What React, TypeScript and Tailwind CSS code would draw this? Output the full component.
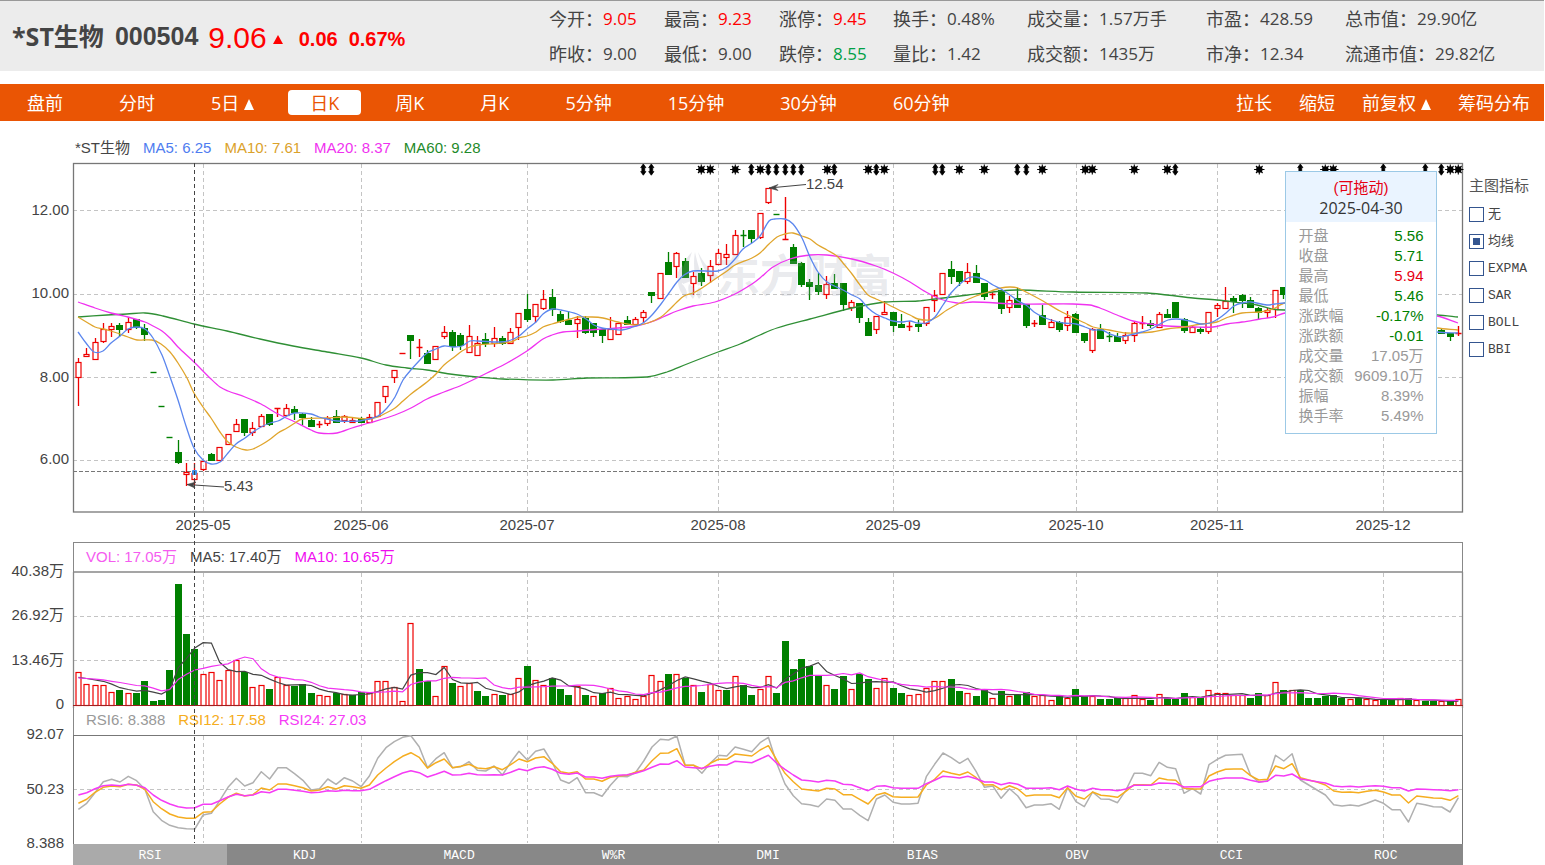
import React from "react";

const SANS = "font-['Liberation_Sans','Noto_Sans_CJK_SC',sans-serif]";
const UI = "font-['Open_Sans','Noto_Sans_CJK_SC',sans-serif]";
const MONO = "font-['Liberation_Mono','Noto_Sans_CJK_SC',monospace]";

const RED = "#ee0000";
const GREEN = "#008000";

const slotX = (i: number) => 78.4 + 8.313 * i;
const crisp = (v: number) => Math.floor(v) + 0.5;

/* colour, high, body top, body bottom, low */
type Candle = [string, number, number, number, number];

const candles: Candle[] = `
r358,362,377,405 r348,354,356,356 r338,342,359,359 r323,329,341,342 r323,326,329,336 g323,325,329,336 r317,322,329,332 g319,319,327,328 g324,328,334,340 g372,372,372,372
g406,406,406,406 g437,437,437,437 g440,452,462,463 r463,472,474,485 r463,473,479,484 r461,461,469,470 g453,454,460,460 r447,447,460,460 r434,434,444,444 r419,424,431,431
g419,419,432,435 r422,428,432,435 r414,416,426,426 g414,414,424,425 r408,408,408,417 r404,408,415,415 g406,409,412,419 g413,414,417,424 g417,420,426,426 r421,424,425,428
r416,418,423,425 g410,416,422,422 r415,416,420,422 r418,420,422,422 g417,419,422,422 r414,417,422,422 r402,402,416,416 r386,386,396,402 r370,370,377,382 r353,353,353,353
g335,335,340,358 r339,347,348,357 g350,353,363,363 r346,346,359,359 r326,332,336,338 g330,332,346,350 g333,335,345,349 r325,336,352,352 r336,343,355,355 g333,339,343,346
r327,338,343,346 g336,338,343,344 r328,332,343,343 r313,313,327,339 g294,309,319,321 r304,304,316,322 r290,299,308,309 g289,297,309,315 g311,314,321,322 g311,320,324,324
r316,319,323,337 g316,318,332,333 g323,323,332,336 g328,329,335,342 r317,329,339,339 r323,323,334,334 g316,320,324,324 r317,319,324,324 r310,312,317,322 g292,292,295,302
r273,273,298,298 g252,262,274,274 r252,253,266,277 g258,261,277,277 r272,276,283,294 g268,273,281,285 r260,266,275,282 r249,253,264,264 r244,254,257,264 r230,235,254,254
g230,235,236,247 g230,230,238,242 r213,213,237,238 r188,188,202,203 g214,214,214,214 r197,239,239,239 g244,247,263,263 g262,263,284,286 g279,282,286,299 g273,285,291,294
r276,284,294,298 g274,283,288,288 g283,283,304,310 r300,302,307,310 g303,303,317,322 g318,322,335,335 r316,316,329,333 r301,312,314,314 g312,312,325,331 g314,324,327,327
r321,326,327,331 g320,324,326,331 r307,307,323,325 r290,295,300,311 r273,273,294,294 g261,269,276,283 g271,271,281,285 r263,272,281,283 g265,273,282,282 g283,283,296,299
r292,294,295,299 g290,290,308,313 r296,300,307,312 g288,298,307,307 g304,304,325,327 r320,323,323,327 g305,315,324,324 r319,322,327,327 g321,322,329,331 r311,317,325,330
g313,314,332,332 g333,333,340,342 r328,329,350,352 g324,329,338,338 g332,336,337,342 g333,336,341,341 r332,335,340,343 r322,323,335,341 r316,323,323,329 g320,323,325,327
r312,314,327,327 g309,314,317,317 g302,302,317,317 g318,319,330,332 r326,327,332,332 g327,329,331,333 r312,312,331,333 r303,305,308,316 r287,301,308,308 g296,298,301,312
g294,295,300,307 g297,300,307,307 g307,308,312,318 r308,310,312,317 r290,290,309,317 g287,287,294,298 r290,292,299,302 g293,295,302,305 g298,300,306,308 r297,300,305,308
g300,302,308,310 g304,306,312,314 r305,307,312,315 g307,309,314,316 g310,312,318,320 r311,313,318,320 g313,315,320,322 g315,317,322,324 r316,318,323,325 g318,320,325,327
g320,322,327,329 r321,323,328,330 g323,325,330,331 g325,327,331,333 g328,330,333,333 g333,333,336,340 r326,333,333,336
`
  .trim()
  .split(/\s+/)
  .map((t) => {
    const [h, a, b, l] = t.slice(1).split(",").map(Number);
    return [t[0], h, a, b, l];
  });

const volumes = `
r33 r21 r20 r20 r13 g15 r12 g12 g24 g4 g5 g35 g121 g71 g56 r31 r33 r25 r35 r45 g33 r18 r20 g16 r28 r20 g19 g21 g12 r10 r9 g12 r11 g10 g13 r12 r24 r24 r18 r4
r82 g36 g24 r9 r39 g22 r19 r22 g14 g9 r11 g10 r11 r27 g39 r25 r20 g27 g16 g10 r19 g10 r9 g12 r17 r7 r9 r6 r9 r30 r24 g31 r31 g27 r20 g13 r21 r15 g15 r29
g20 g10 r16 r29 g12 g64 g36 g46 g39 g29 r20 g16 g29 r16 g31 g26 r17 r27 g17 g12 r10 r11 r17 r24 r24 g26 g14 r12 g9 g15 r7 g14 r9 g10 g13 r9 r10 r5 g9 r7
g16 g9 r9 g6 g6 g7 r7 r10 r6 g5 r11 g7 g6 g12 r8 g8 r15 r12 r12 r10 r10 g7 g12 r10 r23 g15 r15 g15 g7 g7 g9 g10 g7 r6 g7 r6 r5 g6 g5 r7
g7 r5 g4 g4 r4 g4 r6
`
  .trim()
  .split(/\s+/)
  .map((t) => ({ up: t[0] === "r", h: Number(t.slice(1)) }));

/* Moving average of the volume bars; earlier sessions outside the window count as 27. */
const volumeAverage = (n: number) =>
  volumes
    .map((_, i) => {
      let sum = 0;
      for (let k = i - n + 1; k <= i; k++) sum += k < 0 ? 27 : volumes[k].h;
      return `${slotX(i).toFixed(1)},${(705.5 - sum / n).toFixed(1)}`;
    })
    .join(" ");

const MA5 =
  "78,332 86,343 94,352 103,351 111,343 120,336 128,329 137,327 145,329 153,338 162,355 169,374 178,400 186,426 194,448 203,460 211,464 220,462 228,453 236,444 245,438 253,432 261,427 270,423 278,421 287,416 295,413 311,414 319,417 327,419 337,421 360,421 369,419 378,416 387,408 395,397 403,380 410,371 419,361 427,353 436,349 444,346 453,347 462,346 470,341 478,341 500,342 511,340 519,336 527,329 536,322 543,314 552,309 561,310 577,314 586,319 594,325 602,328 611,329 622,330 633,327 643,323 652,315 661,304 669,293 677,282 684,275 693,271 718,271 727,267 735,259 743,249 752,243 760,236 769,221 775,219 785,219 793,224 802,238 810,257 818,272 827,282 843,290 852,295 860,299 868,308 876,314 885,318 893,321 903,322 910,321 918,323 926,323 935,317 943,305 951,293 960,284 968,278 976,277 985,280 993,285 1001,289 1010,295 1018,301 1026,305 1034,312 1043,317 1051,320 1063,323 1076,324 1085,327 1093,330 1102,330 1110,334 1120,337 1130,335 1142,332 1151,329 1160,324 1168,320 1177,319 1190,321 1201,324 1210,323 1218,319 1226,313 1234,306 1242,303 1251,302 1267,305 1275,304 1285,303 1330,306 1390,324 1437,332 1458,333";
const MA10 =
  "78,317 88,323 95,327 103,329 111,331 128,337 137,340 152,340 161,344 170,352 178,363 187,378 194,393 203,407 211,418 220,432 228,442 236,447 246,450 253,449 261,445 269,440 278,433 287,428 295,423 302,419 327,418 344,417 369,419 378,417 386,413 395,408 403,401 411,394 419,388 427,382 436,374 444,365 453,358 462,351 470,347 478,345 511,342 519,338 527,336 536,332 543,327 552,324 570,319 578,317 592,317 603,318 618,322 636,325 648,323 661,317 669,310 677,302 684,296 693,293 702,288 718,277 727,271 735,265 752,258 760,253 769,244 777,237 785,234 793,233 802,236 810,239 818,245 827,250 837,256 843,263 852,274 860,285 868,295 876,299 885,303 893,307 901,311 910,315 918,319 930,320 937,317 947,310 960,303 976,296 985,293 1001,288 1010,287 1018,288 1026,292 1043,301 1060,311 1076,319 1085,323 1093,327 1109,330 1126,333 1152,332 1167,329 1184,327 1201,324 1217,322 1226,318 1242,313 1260,312 1273,309 1285,303 1330,303 1390,319 1437,328 1458,330";
const MA20 =
  "78,302 95,308 111,313 128,317 145,322 153,326 162,331 170,338 178,347 194,362 211,379 220,387 228,391 245,397 261,404 278,414 295,422 311,430 319,433 337,433 352,428 369,423 395,415 411,408 427,399 444,392 462,385 487,373 507,363 527,351 543,339 552,335 563,332 577,331 602,329 618,328 636,326 648,323 663,317 677,311 693,306 715,302 735,294 752,284 760,278 773,267 790,259 810,255 827,255 852,259 876,266 893,273 910,282 926,292 940,299 957,303 973,302 1018,304 1073,304 1090,305 1100,308 1117,315 1133,321 1151,324 1167,326 1193,327 1213,327 1227,324 1242,322 1260,319 1273,317 1285,313 1330,307 1390,310 1437,316 1458,323";
const MA60 =
  "78,317 107,315 127,314 145,313 163,316 194,324 227,331 260,339 293,346 327,352 361,358 386,365 407,368 427,370 450,374 477,377 503,379 553,380 587,378 647,377 667,372 687,364 718,352 740,344 760,335 777,328 810,319 852,308 885,302 918,301 935,299 968,295 1001,291 1018,290 1073,292 1147,293 1167,295 1193,298 1217,300 1242,303 1257,305 1272,309 1285,310 1360,312 1437,315 1458,317";

const RSI6 =
  "838 820 788 755 748 756 739 752 778 845 871 886 893 896 897 855 850 812 772 745 768 758 725 747 713 713 731 751 780 776 747 763 743 753 770 738 685 653 635 622 617 650 713 686 668 713 710 695 721 723 708 735 697 664 690 664 657 697 750 760 743 788 788 799 766 739 740 728 693 651 628 630 618 706 706 730 700 676 678 651 658 665 638 622 700 762 797 821 824 830 807 811 837 837 856 872 807 795 817 822 822 820 740 703 669 683 700 685 725 772 768 805 776 798 833 825 825 821 838 773 815 830 786 807 808 818 781 730 730 737 697 712 716 790 776 792 704 688 676 674 673 735 757 752 676 693 671 750 765 780 795 824 828 825 828 820 810 820 839 839 876 820 824 830 831 846 803";
const RSI12 =
  "820 808 787 772 768 770 763 765 778 815 836 852 861 865 865 847 845 822 802 790 798 794 774 780 762 762 767 773 783 780 770 777 767 770 775 765 735 714 695 679 668 682 714 698 687 713 709 703 714 716 710 719 704 687 695 684 680 700 725 730 725 747 747 754 742 738 736 727 720 692 670 669 656 706 706 717 700 688 688 672 675 678 660 647 690 730 755 777 780 783 775 777 794 794 808 822 795 788 800 802 802 801 765 748 723 730 735 726 743 765 764 779 767 777 798 795 795 795 803 773 799 807 786 796 798 802 784 764 764 765 744 749 751 775 777 777 738 726 718 717 717 737 750 748 708 716 701 743 750 756 765 783 787 786 788 784 781 786 795 795 819 798 801 804 805 811 797";
const RSI24 =
  "795 788 776 767 765 767 763 766 773 795 811 822 830 834 833 823 823 812 801 793 797 795 785 788 778 778 781 784 788 787 782 784 781 782 782 778 765 752 740 729 722 728 741 733 724 735 734 730 734 735 734 735 727 717 722 713 710 718 730 733 729 741 741 745 739 736 734 730 722 712 702 703 692 711 713 715 709 704 705 694 696 698 687 676 700 718 735 750 752 756 751 753 763 764 773 782 769 767 773 775 775 775 761 751 739 741 744 739 746 756 756 764 758 763 775 775 775 773 779 768 778 783 775 779 779 782 777 766 766 766 759 760 761 771 770 770 754 748 744 744 744 751 756 754 736 738 732 747 751 755 759 768 770 769 771 769 767 769 773 773 783 777 778 779 780 782 779";

const rsiPoints = (s: string) =>
  s
    .split(" ")
    .map((v, i) => `${slotX(i).toFixed(1)},${(530 + Number(v) / 3).toFixed(1)}`)
    .join(" ");

/* Smooth path through the given points (Catmull-Rom to Bézier). */
const smooth = (s: string) => {
  const p = s.split(" ").map((q) => q.split(",").map(Number));
  let d = `M${p[0][0]} ${p[0][1]}`;
  for (let i = 0; i < p.length - 1; i++) {
    const a = p[Math.max(0, i - 1)];
    const b = p[i];
    const c = p[i + 1];
    const e = p[Math.min(p.length - 1, i + 2)];
    const k = (c[0] - b[0]) / 3;
    const m1 = (c[1] - a[1]) / (c[0] - a[0]);
    const m2 = (e[1] - b[1]) / (e[0] - b[0]);
    d += `C${(b[0] + k).toFixed(1)} ${(b[1] + k * m1).toFixed(1)} ${(c[0] - k).toFixed(1)} ${(c[1] - k * m2).toFixed(1)} ${c[0]} ${c[1]}`;
  }
  return d;
};

const months = [
  { x: 203, label: "2025-05" },
  { x: 361, label: "2025-06" },
  { x: 527, label: "2025-07" },
  { x: 718, label: "2025-08" },
  { x: 893, label: "2025-09" },
  { x: 1076, label: "2025-10" },
  { x: 1217, label: "2025-11" },
  { x: 1383, label: "2025-12" },
];

const starMarks = [701, 710, 735, 760, 827, 868, 884, 959, 984, 1042, 1085, 1092, 1134, 1167, 1259, 1325, 1333, 1450, 1458];
const arrowMarks = [643, 651, 751, 768, 776, 785, 793, 801, 834, 876, 935, 942, 1017, 1026, 1175, 1300, 1383, 1425, 1441];

function MonthLines({ from, to }: { from: number; to: number }) {
  return (
    <g stroke="#c4c4c4" strokeDasharray="4 3">
      {months.map((m) => (
        <line key={m.x} x1={m.x + 0.5} x2={m.x + 0.5} y1={from} y2={to} />
      ))}
    </g>
  );
}

function Level({ y }: { y: number }) {
  return <line x1="73" x2="1462" y1={y} y2={y} stroke="#c4c4c4" strokeDasharray="4 3" />;
}

function AxisText({ x, y, anchor = "end", children }: { x: number; y: number; anchor?: "end" | "middle" | "start"; children: React.ReactNode }) {
  return (
    <text x={x} y={y} textAnchor={anchor} fill="#444">
      {children}
    </text>
  );
}

function CandleShape({ i, c }: { i: number; c: Candle }) {
  const [kind, high, top, bottom, low] = c;
  const x = crisp(slotX(i));
  const color = kind === "r" ? RED : GREEN;
  const flat = bottom - top <= 1;
  return (
    <g stroke={color} fill={color}>
      {flat ? (
        <path d={`M${x - 3} ${top + 0.5}h6M${x} ${high}V${low}`} strokeWidth="1.4" />
      ) : kind === "g" ? (
        <>
          <path d={`M${x} ${high}V${low + 1}`} strokeWidth="1.3" />
          <rect x={x - 3.5} y={top} width="7" height={bottom - top + 1} stroke="none" />
        </>
      ) : (
        <>
          <path d={`M${x} ${high}V${top}M${x} ${bottom}V${low + 1}`} strokeWidth="1.3" />
          <rect x={x - 2.5} y={top + 0.5} width="5" height={bottom - top} strokeWidth="1.2" fill="#fff" fillOpacity="0.4" />
        </>
      )}
    </g>
  );
}

function PriceChart() {
  return (
    <svg viewBox="0 157 1463 385" className={`block h-auto w-full overflow-visible text-[15px] ${SANS}`} fill="none" role="img" aria-label="日K线图">
      <MonthLines from={164} to={512} />
      {[210.5, 294.5, 377.5, 460.5].map((y) => (
        <Level key={y} y={y} />
      ))}
      <line x1="73" x2="1462" y1="471.5" y2="471.5" stroke="#777" strokeDasharray="4 2" />
      <rect x="73.5" y="163.5" width="1389" height="348.5" stroke="#777" strokeWidth="1.3" />
      {candles.map((c, i) => (
        <CandleShape key={i} i={i} c={c} />
      ))}
      <g fill="#a0a5b5" fillOpacity="0.24">
        <path d="M692 252c-8 7-11 19-9 32l8-3c-3-10-3-19 1-29zM695 252c-2 11-1 23 3 34l6-4c-4-10-7-20-9-30zM698 252c3 12 8 21 14 29l6-5c-9-6-15-14-20-24zM683 265c-6 5-7 12-3 20l4-3zM678 281c0 7 3 13 9 18 1-8-2-14-9-18zM689 284c-2 6 0 11 4 15 4-6 3-11-4-15zM699 287c-3 4-3 8 0 12 4-4 4-8 0-12z" />
        <text x="716" y="292" className="font-['Noto_Sans_CJK_SC',sans-serif] text-[44px] font-bold">
          东方财富
        </text>
      </g>
      <g strokeWidth="1.3">
        <path d={smooth(MA60)} stroke="#2f8f35" />
        <path d={smooth(MA20)} stroke="#f032f0" />
        <path d={smooth(MA10)} stroke="#e0a52c" />
        <path d={smooth(MA5)} stroke="#5b86ee" />
      </g>
      <rect x="192" y="470" width="5" height="5" rx="1" fill="#3f8fe8" />
      <g fill="#000" stroke="#000">
        {starMarks.map((x) => (
          <g key={x}>
            <circle cx={x + 0.3} cy="169.5" r="3.2" stroke="none" />
            <path d={`M${x - 4.9} 169.5h10.400M${x + 0.3} 164.400v10.200M${x - 3} 166l6.6 7M${x + 3.6} 166l-6.6 7`} strokeWidth="1.1" />
          </g>
        ))}
        {arrowMarks.map((x) => (
          <path key={x} d={`M${x + 0.3} 164l2.6 3.600h-1.2v4h1.2l-2.6 3.600l-2.6-3.600h1.2v-4h-1.2z`} strokeWidth="0.8" />
        ))}
      </g>
      <g stroke="#444" fill="#444">
        <path d="M806 184.500L769 188" />
        <path d="M769 188L778 184.500L775 187.500L778 190.500z" strokeWidth="0.6" />
        <path d="M224 487L187 484.500" />
        <path d="M187 484.500L196 482L193 485L195 488z" strokeWidth="0.6" />
      </g>
      <AxisText x={806} y={189} anchor="start">12.54</AxisText>
      <AxisText x={224} y={491} anchor="start">5.43</AxisText>
      <AxisText x={69} y={215}>12.00</AxisText>
      <AxisText x={69} y={298}>10.00</AxisText>
      <AxisText x={69} y={382}>8.00</AxisText>
      <AxisText x={69} y={464}>6.00</AxisText>
      {months.map((m) => (
        <AxisText key={m.label} x={m.x} y={530} anchor="middle">
          {m.label}
        </AxisText>
      ))}
    </svg>
  );
}

function VolumeChart() {
  return (
    <svg viewBox="0 572 1463 136" className={`block h-auto w-full overflow-visible text-[15px] ${SANS}`} fill="none" role="img" aria-label="成交量">
      <MonthLines from={573} to={705} />
      <Level y={616.5} />
      <Level y={660.5} />
      <path d="M73.500 572V708M1462.500 572V708M73 572H1463" stroke="#888" strokeWidth="1.3" />
      {volumes.map((v, i) => {
        const x = crisp(slotX(i));
        return v.up ? (
          <rect key={i} x={x - 2.5} y={705.5 - v.h} width="5" height={v.h} stroke={RED} strokeWidth="1.2" fill="#fff" />
        ) : (
          <rect key={i} x={x - 3.5} y={705 - v.h} width="7" height={v.h + 1} fill={GREEN} />
        );
      })}
      <line x1="73" x2="1463" y1="705.5" y2="705.5" stroke="#a02020" />
      <polyline points={volumeAverage(5)} stroke="#444" strokeWidth="1.2" />
      <polyline points={volumeAverage(10)} stroke="#f032f0" strokeWidth="1.2" />
      <AxisText x={64} y={576}>40.38万</AxisText>
      <AxisText x={64} y={620}>26.92万</AxisText>
      <AxisText x={64} y={665}>13.46万</AxisText>
      <AxisText x={64} y={709}>0</AxisText>
    </svg>
  );
}

function RsiChart() {
  return (
    <svg viewBox="0 735 1463 109" className={`block h-auto w-full overflow-visible text-[15px] ${SANS}`} fill="none" role="img" aria-label="RSI">
      <MonthLines from={736} to={843} />
      <Level y={789.5} />
      <path d="M73.500 735V844M1462.500 735V844M73 735.500H1463" stroke="#777" />
      <g strokeWidth="1.5" strokeLinejoin="round">
        <polyline points={rsiPoints(RSI6)} stroke="#b0b0b0" />
        <polyline points={rsiPoints(RSI12)} stroke="#f5ad20" />
        <polyline points={rsiPoints(RSI24)} stroke="#f53cf5" />
      </g>
      <AxisText x={64} y={739}>92.07</AxisText>
      <AxisText x={64} y={794}>50.23</AxisText>
      <AxisText x={64} y={848}>8.388</AxisText>
    </svg>
  );
}

const quoteColumns = [
  { w: "w-[115px]", rows: [["今开", "9.05", "text-[#f00]"], ["昨收", "9.00", ""]] },
  { w: "w-[115px]", rows: [["最高", "9.23", "text-[#f00]"], ["最低", "9.00", ""]] },
  { w: "w-[114px]", rows: [["涨停", "9.45", "text-[#f00]"], ["跌停", "8.55", "text-[#00a046]"]] },
  { w: "w-[134px]", rows: [["换手", "0.48%", ""], ["量比", "1.42", ""]] },
  { w: "w-[179px]", rows: [["成交量", "1.57万手", ""], ["成交额", "1435万", ""]] },
  { w: "w-[139px]", rows: [["市盈", "428.59", ""], ["市净", "12.34", ""]] },
  { w: "w-[180px]", rows: [["总市值", "29.90亿", ""], ["流通市值", "29.82亿", ""]] },
];

function QuoteHeader() {
  return (
    <header className="flex h-[71px] border-t border-[#999] bg-[#ececec] text-[#444]">
      <div className="flex min-w-[549px] items-center pt-0.5 pl-3">
        <h1 className={`text-[25px] font-bold ${UI}`}>*ST生物</h1>
        <span className={`ml-[11px] text-[25px] font-bold ${SANS}`}>000504</span>
        <span className={`ml-2.5 text-[30px] text-[#f00] ${SANS}`}>9.06</span>
        <svg viewBox="0 0 10 9" className="mt-1 ml-1.5 h-[9px] w-2.5" fill="#f00" aria-hidden="true">
          <path d="M5 0L10 9H0z" />
        </svg>
        <span className={`mt-1 ml-4 text-xl font-bold text-[#f00] ${SANS}`}>0.06</span>
        <span className={`mt-1 ml-[11px] text-xl font-bold text-[#f00] ${SANS}`}>0.67%</span>
      </div>
      <div className={`flex ${UI}`}>
        {quoteColumns.map((col) => (
          <dl key={col.rows[0][0]} className={`${col.w} shrink-0`}>
            {col.rows.map(([k, v, tone]) => (
              <div key={k} className="flex h-[35px] items-center whitespace-nowrap">
                <dt className="text-lg">{k}：</dt>
                <dd className={`text-[17px] ${tone}`}>{v}</dd>
              </div>
            ))}
          </dl>
        ))}
      </div>
    </header>
  );
}

function Caret() {
  return (
    <svg viewBox="0 0 10 11" className="mt-1 h-[11px] w-2.5" fill="currentColor" aria-hidden="true">
      <path d="M5 0L10 11H0z" />
    </svg>
  );
}

const periods = ["盘前", "分时", "5日", "日K", "周K", "月K", "5分钟", "15分钟", "30分钟", "60分钟"];
const tools = ["拉长", "缩短", "前复权", "筹码分布"];

function PeriodNav() {
  return (
    <nav className={`mt-[13px] flex h-[37px] items-center justify-between bg-[#ea5504] pr-3.5 pl-[5px] text-lg text-white ${UI}`}>
      <div className="flex items-center gap-3">
        {periods.map((p) => (
          <button
            key={p}
            type="button"
            aria-pressed={p === "日K"}
            className={`flex h-[25px] items-center gap-[5px] rounded px-[22px] whitespace-nowrap ${p === "日K" ? "bg-white text-[#ea5504]" : ""}`}
          >
            {p}
            {p === "5日" && <Caret />}
          </button>
        ))}
      </div>
      <div className="flex items-center gap-[27px]">
        {tools.map((t) => (
          <button key={t} type="button" className="flex items-center gap-[5px] whitespace-nowrap">
            {t}
            {t === "前复权" && <Caret />}
          </button>
        ))}
      </div>
    </nav>
  );
}

const detailRows = [
  ["开盘", "5.56", "text-[#008000]"],
  ["收盘", "5.71", "text-[#008000]"],
  ["最高", "5.94", "text-[#e60012]"],
  ["最低", "5.46", "text-[#008000]"],
  ["涨跌幅", "-0.17%", "text-[#008000]"],
  ["涨跌额", "-0.01", "text-[#008000]"],
  ["成交量", "17.05万", "text-[#999]"],
  ["成交额", "9609.10万", "text-[#999]"],
  ["振幅", "8.39%", "text-[#999]"],
  ["换手率", "5.49%", "text-[#999]"],
];

function DayDetail() {
  return (
    <div className={`absolute top-[50px] right-[26px] w-[152px] border border-[#9cc9e6] bg-white pb-[7px] text-[15px] leading-5 ${SANS}`}>
      <div className="bg-[#eaf4ff] pt-1.5 pb-1 text-center">
        <div className="text-[#e60012]">(可拖动)</div>
        <div className={`text-base leading-5 text-[#333] ${UI}`}>2025-04-30</div>
      </div>
      <table className="mx-auto mt-1 w-[125px]">
        <tbody>
          {detailRows.map(([k, v, tone]) => (
            <tr key={k}>
              <th scope="row" className="p-0 text-left font-normal whitespace-nowrap text-[#999]">{k}</th>
              <td className={`p-0 text-right whitespace-nowrap ${tone}`}>{v}</td>
            </tr>
          ))}
        </tbody>
      </table>
    </div>
  );
}

const overlays = ["无", "均线", "EXPMA", "SAR", "BOLL", "BBI"];

function OverlayPicker() {
  return (
    <aside className="w-[81px] shrink-0 pt-[55px] pl-1.5">
      <h2 className={`text-[15px] leading-5 whitespace-nowrap text-[#555] ${SANS}`}>主图指标</h2>
      <div className="mt-[5px]">
        {overlays.map((o) => (
          <label key={o} className={`flex h-[27px] items-center gap-1 text-[13px] whitespace-nowrap text-[#444] ${MONO}`}>
            <input
              type="checkbox"
              defaultChecked={o === "均线"}
              className="size-[15px] appearance-none border border-[#34558f] bg-white checked:bg-[#34558f] checked:shadow-[inset_0_0_0_3px_white]"
            />
            {o}
          </label>
        ))}
      </div>
    </aside>
  );
}

const indicators = ["RSI", "KDJ", "MACD", "W%R", "DMI", "BIAS", "OBV", "CCI", "ROC"];

export default function App() {
  return (
    <div className="min-w-[1200px] overflow-hidden bg-white pr-px">
      <QuoteHeader />
      <PeriodNav />
      <main className="flex items-start">
        <section className="relative min-w-0 flex-1">
          <div className={`flex h-9 gap-[13px] pt-[17px] pl-[75px] text-[15px] leading-5 ${SANS}`}>
            <span className="text-[#444]">*ST生物</span>
            <span className="text-[#4f7df0]">MA5: 6.25</span>
            <span className="text-[#dba22b]">MA10: 7.61</span>
            <span className="text-[#f032f0]">MA20: 8.37</span>
            <span className="text-[#1f8a2a]">MA60: 9.28</span>
          </div>
          <PriceChart />
          <div className={`ml-[73px] flex h-[30px] items-center gap-[13px] border-x border-t border-[#888] pl-3 text-[15px] ${SANS}`}>
            <span className="text-[#f55cf0]">VOL: 17.05万</span>
            <span className="text-[#444]">MA5: 17.40万</span>
            <span className="text-[#f00cf0]">MA10: 10.65万</span>
          </div>
          <VolumeChart />
          <div className={`ml-[73px] flex h-[27px] items-center gap-[13px] border-x border-[#888] pb-0.5 pl-3 text-[15px] ${SANS}`}>
            <span className="text-[#999]">RSI6: 8.388</span>
            <span className="text-[#f5ad20]">RSI12: 17.58</span>
            <span className="text-[#f53cf5]">RSI24: 27.03</span>
          </div>
          <RsiChart />
          <div className={`ml-[73px] grid h-[21px] grid-cols-9 bg-[#888] text-[13px] text-white ${MONO}`}>
            {indicators.map((name) => (
              <button key={name} type="button" aria-pressed={name === "RSI"} className={`pt-0.5 ${name === "RSI" ? "bg-[#aaa]" : ""}`}>
                {name}
              </button>
            ))}
          </div>
          <svg viewBox="0 163 1463 680" className="pointer-events-none absolute top-[42px] left-0 h-auto w-full" aria-hidden="true">
            <line x1="194.500" x2="194.500" y1="163" y2="843" stroke="#444" strokeDasharray="4 3" />
          </svg>
          <DayDetail />
        </section>
        <OverlayPicker />
      </main>
    </div>
  );
}
